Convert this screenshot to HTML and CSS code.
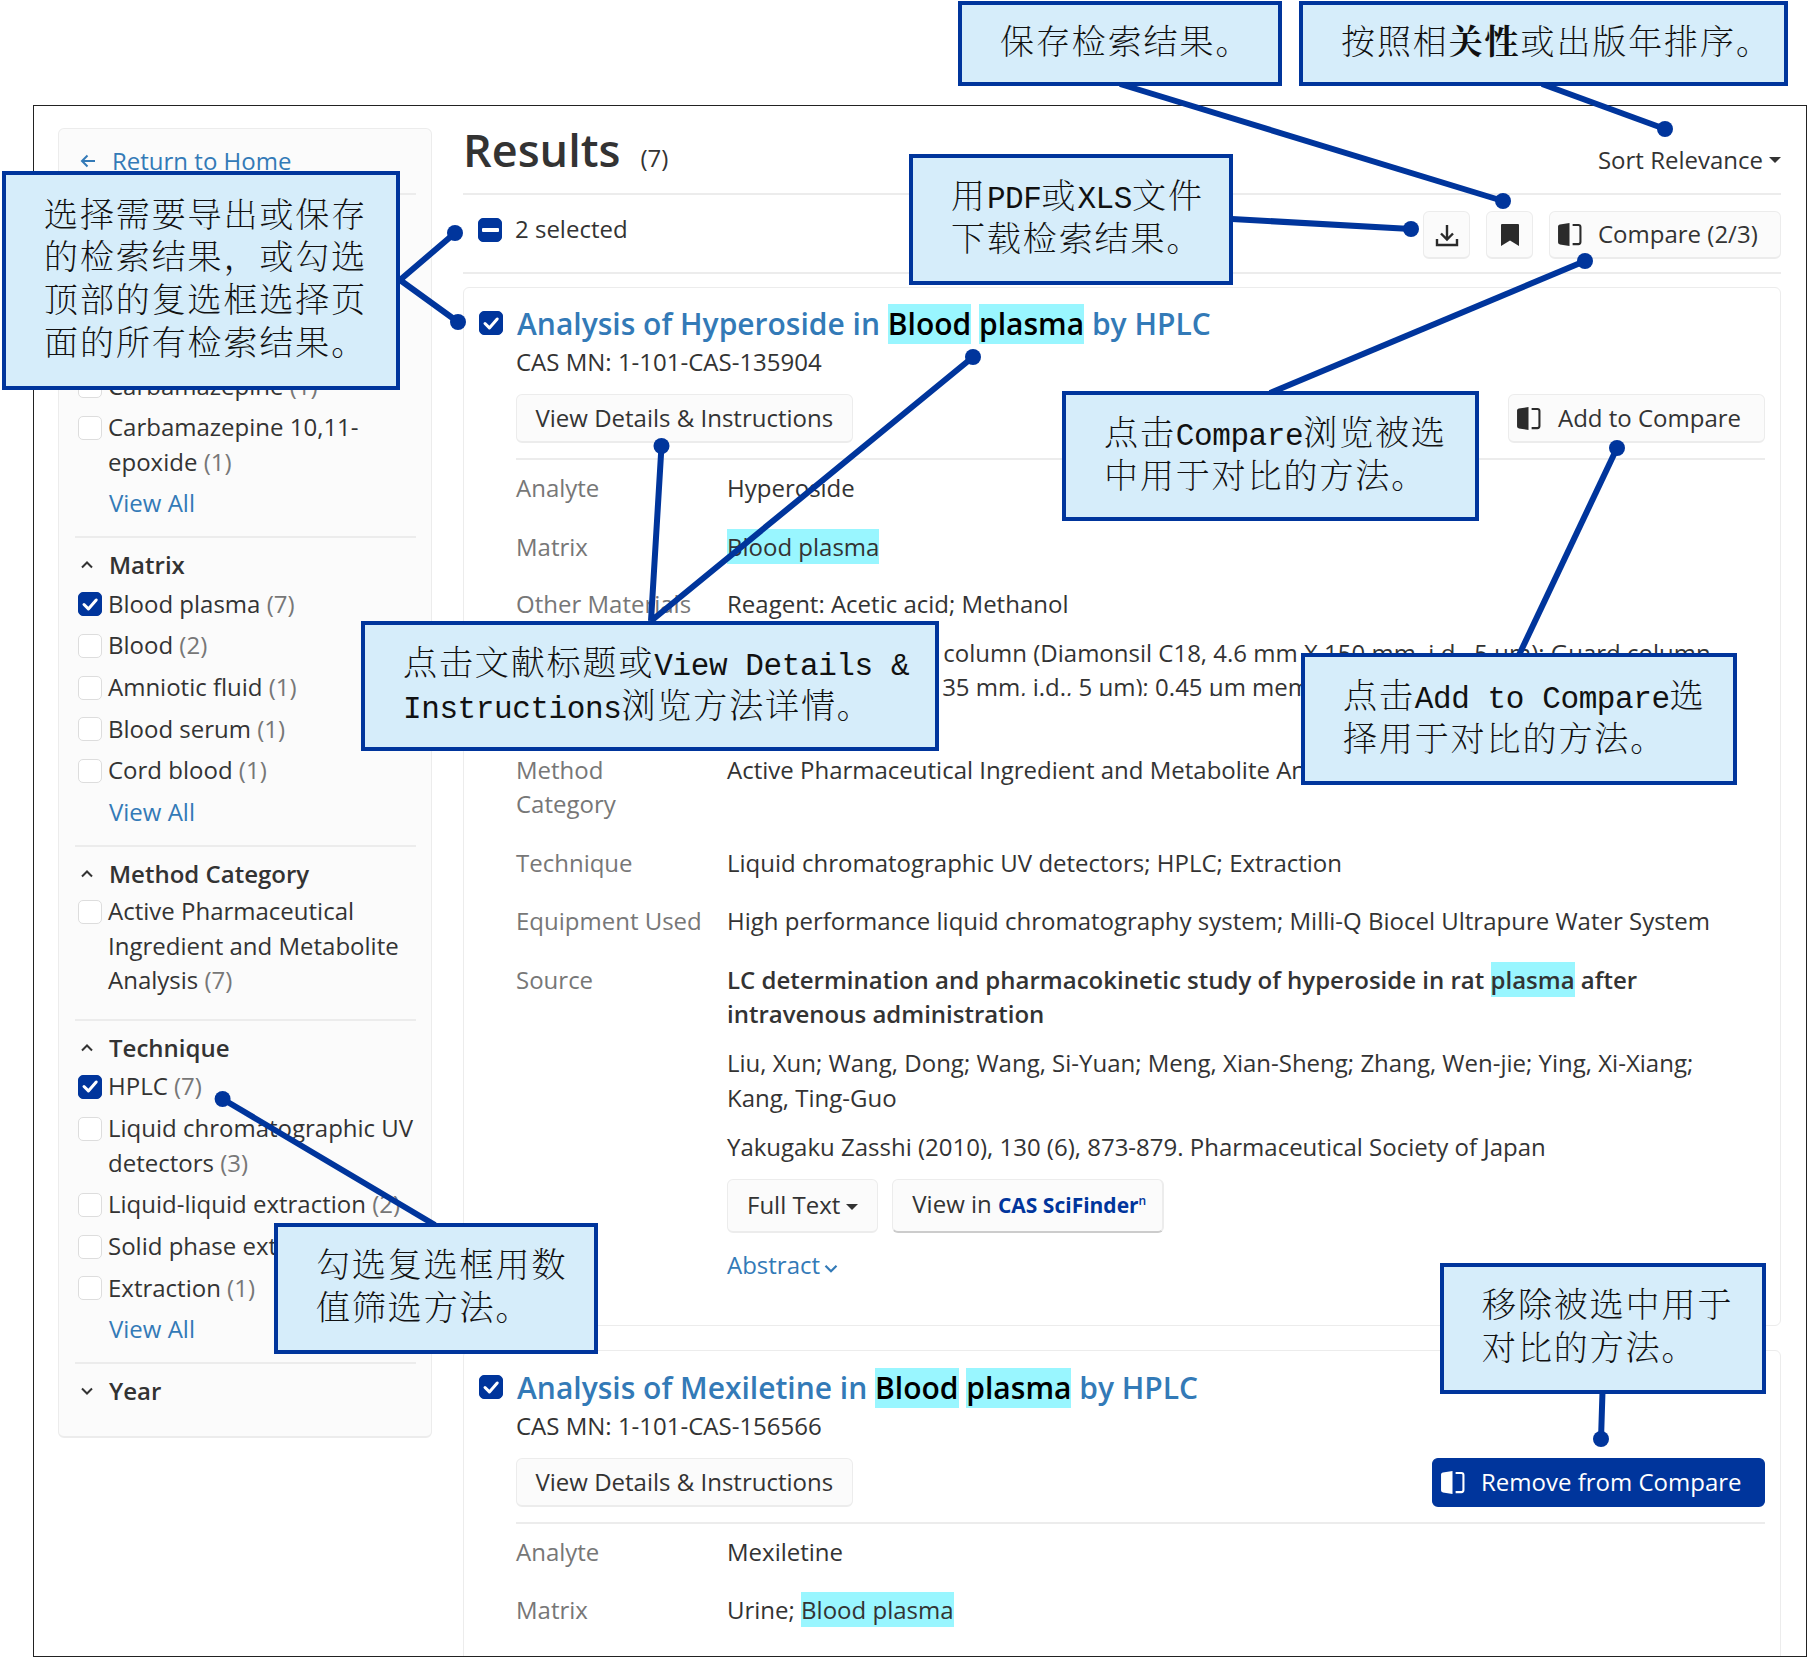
FILE: index.html
```html
<!DOCTYPE html>
<html lang="en">
<head>
<meta charset="utf-8">
<title>CAS Methods Results</title>
<link rel="stylesheet" href="styles.css">
</head>
<body>
<svg class="defs" width="0" height="0" aria-hidden="true">
  <symbol id="chk" viewBox="0 0 24 24"><path d="M6 12.500l4.400 4.400L18.200 8" fill="none" stroke="#fff" stroke-width="3" stroke-linecap="round" stroke-linejoin="round"/></symbol>
  <symbol id="cmp" viewBox="0 0 24 24"><path d="M1 4.500C1 3.400 1.800 2.700 2.800 2.500L12 1v22l-9.200-1.500C1.800 21.300 1 20.600 1 19.500z" fill="currentColor"/><path d="M15 2.800h5.500a2 2 0 0 1 2 2v14.400a2 2 0 0 1-2 2H15" fill="none" stroke="currentColor" stroke-width="2"/></symbol>
  <symbol id="up" viewBox="0 0 14 10"><path d="M2 7.500l5-5 5 5" fill="none" stroke="currentColor" stroke-width="2"/></symbol>
  <symbol id="down" viewBox="0 0 14 10"><path d="M2 2.500l5 5 5-5" fill="none" stroke="currentColor" stroke-width="2"/></symbol>
</svg>
<div class="stage">
  <div class="frame">
    <aside class="side">
      <div class="home"><svg class="back" viewBox="0 0 16 14"><path d="M15 7H2M7.500 1.500L2 7l5.500 5.500" fill="none" stroke="currentColor" stroke-width="2"/></svg><a class="link">Return to Home</a></div>

      <section class="facet">
        <h3><svg class="chev"><use href="#up"/></svg>Analyte</h3>
        <div class="opt"><i class="box"></i><span>Hyperoside <em>(1)</em></span></div>
        <div class="opt"><i class="box"></i><span>Mexiletine <em>(1)</em></span></div>
        <div class="opt"><i class="box"></i><span>Atorvastatin <em>(1)</em></span></div>
        <div class="opt"><i class="box"></i><span>Carbamazepine <em>(1)</em></span></div>
        <div class="opt"><i class="box"></i><span>Carbamazepine 10,11-<br>epoxide <em>(1)</em></span></div>
        <a class="link all">View All</a>
      </section>

      <section class="facet">
        <h3><svg class="chev"><use href="#up"/></svg>Matrix</h3>
        <div class="opt"><i class="box on"><svg><use href="#chk"/></svg></i><span>Blood plasma <em>(7)</em></span></div>
        <div class="opt"><i class="box"></i><span>Blood <em>(2)</em></span></div>
        <div class="opt"><i class="box"></i><span>Amniotic fluid <em>(1)</em></span></div>
        <div class="opt"><i class="box"></i><span>Blood serum <em>(1)</em></span></div>
        <div class="opt"><i class="box"></i><span>Cord blood <em>(1)</em></span></div>
        <a class="link all">View All</a>
      </section>

      <section class="facet short">
        <h3><svg class="chev"><use href="#up"/></svg>Method Category</h3>
        <div class="opt"><i class="box"></i><span>Active Pharmaceutical<br>Ingredient and Metabolite<br>Analysis <em>(7)</em></span></div>
      </section>

      <section class="facet">
        <h3><svg class="chev"><use href="#up"/></svg>Technique</h3>
        <div class="opt"><i class="box on"><svg><use href="#chk"/></svg></i><span>HPLC <em>(7)</em></span></div>
        <div class="opt"><i class="box"></i><span>Liquid chromatographic UV<br>detectors <em>(3)</em></span></div>
        <div class="opt"><i class="box"></i><span>Liquid-liquid extraction <em>(2)</em></span></div>
        <div class="opt"><i class="box"></i><span>Solid phase extraction <em>(2)</em></span></div>
        <div class="opt"><i class="box"></i><span>Extraction <em>(1)</em></span></div>
        <a class="link all">View All</a>
      </section>

      <section class="facet last">
        <h3><svg class="chev"><use href="#down"/></svg>Year</h3>
      </section>
    </aside>

    <main class="main">
      <header class="head">
        <h1>Results</h1><span class="count">(7)</span>
        <div class="sort">Sort Relevance<i class="caret"></i></div>
      </header>
      <div class="tools">
        <i class="box on big"><b class="dash"></b></i>
        <span class="sel">2 selected</span>
        <div class="toolbtns">
          <button class="btn sq"><svg class="ico" viewBox="0 0 24 24"><path d="M12 2v14M6 10.500l6 6 6-6M2 16v6h20v-6" fill="none" stroke="currentColor" stroke-width="2.400"/></svg></button>
          <button class="btn sq"><svg class="ico" viewBox="0 0 24 24"><path d="M4 1h16a1 1 0 0 1 1 1v21l-9-5.500L3 23V2a1 1 0 0 1 1-1z" fill="currentColor"/></svg></button>
          <button class="btn cmpbtn"><svg class="cmpi"><use href="#cmp"/></svg>Compare (2/3)</button>
        </div>
      </div>

      <article class="card first">
        <div class="title"><i class="box on big"><svg><use href="#chk"/></svg></i><h2>Analysis of Hyperoside in <mark>Blood</mark> <mark>plasma</mark> by HPLC</h2></div>
        <div class="cas">CAS MN: 1-101-CAS-135904</div>
        <div class="acts"><button class="btn">View Details &amp; Instructions</button><button class="btn cmpbtn small"><svg class="cmpi"><use href="#cmp"/></svg>Add to Compare</button></div>
        <div class="row"><div class="lab">Analyte</div><div class="val">Hyperoside</div></div>
        <div class="row"><div class="lab">Matrix</div><div class="val"><mark>Blood plasma</mark></div></div>
        <div class="row tight"><div class="lab">Other Materials</div><div class="val">Reagent: Acetic acid; Methanol</div></div>
        <div class="row clip"><div class="lab">Equipment</div><div class="val"><span class="pre">Column: Analytical</span> column (Diamonsil C18, 4.6 mm X 150 mm, i.d., 5 μm); Guard column<br><span class="pre2">(Diamonsil C18, 8 X</span> 35 mm, i.d., 5 μm); 0.45 μm membrane filter</div></div>
        <div class="row"><div class="lab">Method<br>Category</div><div class="val">Active Pharmaceutical Ingredient and Metabolite Analysis</div></div>
        <div class="row"><div class="lab">Technique</div><div class="val">Liquid chromatographic UV detectors; HPLC; Extraction</div></div>
        <div class="row"><div class="lab">Equipment Used</div><div class="val">High performance liquid chromatography system; Milli-Q Biocel Ultrapure Water System</div></div>
        <div class="row src"><div class="lab">Source</div><div class="val">
          <p class="srct">LC determination and pharmacokinetic study of hyperoside in rat <mark>plasma</mark> after<br>intravenous administration</p>
          <p>Liu, Xun; Wang, Dong; Wang, Si-Yuan; Meng, Xian-Sheng; Zhang, Wen-jie; Ying, Xi-Xiang;<br>Kang, Ting-Guo</p>
          <p>Yakugaku Zasshi (2010), 130 (6), 873-879. Pharmaceutical Society of Japan</p>
          <div class="links"><button class="btn tall">Full Text<i class="caret"></i></button><button class="btn tall sci">View in <strong>CAS SciFinder<sup>n</sup></strong></button></div>
          <a class="link abs">Abstract<svg class="absi"><use href="#down"/></svg></a>
        </div></div>
      </article>

      <article class="card second">
        <div class="title"><i class="box on big"><svg><use href="#chk"/></svg></i><h2>Analysis of Mexiletine in <mark>Blood</mark> <mark>plasma</mark> by HPLC</h2></div>
        <div class="cas">CAS MN: 1-101-CAS-156566</div>
        <div class="acts"><button class="btn">View Details &amp; Instructions</button><button class="btn cmpbtn small active"><svg class="cmpi"><use href="#cmp"/></svg>Remove from Compare</button></div>
        <div class="row"><div class="lab">Analyte</div><div class="val">Mexiletine</div></div>
        <div class="row"><div class="lab">Matrix</div><div class="val">Urine; <mark>Blood plasma</mark></div></div>
      </article>
    </main>
  </div>

  <svg class="wires" viewBox="0 0 1807 1658">
    <g fill="none" stroke="#00359c" stroke-width="6">
      <path d="M400 280L455 233M400 280L458 322"/>
      <path d="M1120 84L1503 201"/>
      <path d="M1542 84L1665 129"/>
      <path d="M1232 219L1411 229"/>
      <path d="M1270 393L1585 261"/>
      <path d="M1519 655L1617 448"/>
      <path d="M651 621L973 357M651 621L661.500 446"/>
      <path d="M435 1225L222.600 1099"/>
      <path d="M1602.500 1392L1601 1439"/>
    </g>
    <g fill="#00359c">
      <circle cx="455" cy="233" r="8"/><circle cx="458" cy="322" r="8"/>
      <circle cx="1503" cy="201" r="8"/><circle cx="1665" cy="129" r="8"/>
      <circle cx="1411" cy="229" r="8"/><circle cx="1585" cy="261" r="8"/>
      <circle cx="1617" cy="448" r="8"/><circle cx="973" cy="357" r="8"/>
      <circle cx="661.500" cy="446" r="8"/><circle cx="222.600" cy="1099" r="8"/>
      <circle cx="1601" cy="1439" r="8"/>
    </g>
  </svg>

  <div class="note n-a"><div>选择需要导出或保存<br>的检索结果，或勾选<br>顶部的复选框选择页<br>面的所有检索结果。</div></div>
  <div class="note n-b"><div>保存检索结果。</div></div>
  <div class="note n-c"><div>按照相<b>关性</b>或出版年排序。</div></div>
  <div class="note n-d"><div>用<span class="lat">PDF</span>或<span class="lat">XLS</span>文件<br>下载检索结果。</div></div>
  <div class="note n-e"><div>点击<span class="lat">Compare</span>浏览被选<br>中用于对比的方法。</div></div>
  <div class="note n-f"><div>点击文献标题或<span class="lat">View Details &amp;</span><br><span class="lat">Instructions</span>浏览方法详情。</div></div>
  <div class="note n-g"><div>点击<span class="lat">Add to Compare</span>选<br>择用于对比的方法。</div></div>
  <div class="note n-h"><div>勾选复选框用数<br>值筛选方法。</div></div>
  <div class="note n-i"><div>移除被选中用于<br>对比的方法。</div></div>
</div>
</body>
</html>
```
FILE: styles.css
```css
* { box-sizing: border-box; }
html, body { margin: 0; padding: 0; background: #fff; }
body { font-family: "Open Sans", "Noto Sans", sans-serif; font-size: 24px; line-height: 34.5px; color: #333; }
.defs { position: absolute; }
.stage { position: relative; width: 1807px; height: 1658px; overflow: hidden; padding: 105px 0 0 33px; }
.frame { width: 1774px; height: 1552px; border: 1.5px solid #222; overflow: hidden; display: flex; align-items: flex-start; background: #fff; }

/* sidebar */
.side { width: 374px; margin: 21.5px 0 0 24px; padding: 15px 15.5px 0 16px; background: #fbfbfb; border: 1px solid #ececec; border-bottom-width: 2px; border-radius: 6px; height: 1310px; flex: none; }
.home { display: flex; align-items: center; height: 34.5px; margin-bottom: 15px; padding-left: 5px; color: #337ab7; }
.back { width: 16px; height: 14px; margin-right: 16px; }
.link { color: #337ab7; }
.facet { border-top: 2px solid #ececec; padding-top: 10px; padding-bottom: 15.2px; }
.facet.short { padding-bottom: 14px; }
.facet.short h3 { margin-bottom: 3px; }
.facet h3 { display: flex; align-items: center; margin: 0 0 4px; font-size: 24px; line-height: 34.5px; font-weight: 600; color: #333; }
.chev { width: 14px; height: 10px; margin: 0 15px 0 5px; color: #333; }
.opt { display: flex; align-items: flex-start; margin-bottom: 7.2px; padding-left: 3px; }
.opt em { font-style: normal; color: #777; }
.opt span { margin-left: 6px; }
.box { flex: none; display: block; width: 24px; height: 24px; margin-top: 5.5px; border: 1.5px solid #ddd; border-radius: 5px; background: #fff; }
.box svg { display: block; width: 100%; height: 100%; }
.box.on { background: #00359c; border-color: #00359c; }
.box.big { margin-top: 0; }
.box.on svg { width: 24px; height: 24px; margin: -1.5px; }
.all { display: block; margin: 0 0 0 34px; }
.last { padding-bottom: 0; }

/* results */
.main { width: 1318px; margin-left: 31px; flex: none; }
.head { display: flex; align-items: baseline; height: 89px; padding-top: 17px; border-bottom: 2px solid #ececec; }
.head h1 { margin: 0; font-size: 45px; line-height: 54px; font-weight: 600; color: #333; }
.count { margin-left: 20px; }
.sort { margin-left: auto; display: flex; align-items: center; position: relative; top: 1.5px; }
.caret { display: inline-block; width: 0; height: 0; margin-left: 6px; border: 6px solid transparent; border-top-color: #333; border-bottom: 0; }
.tools { display: flex; align-items: center; height: 79px; border-bottom: 2px solid #ececec; padding-left: 15px; }
.tools .box { margin-bottom: 7px; }
.dash { display: block; width: 17px; height: 4px; margin: 8.5px auto 0; background: #fff; border-radius: 1px; }
.sel { margin-left: 13px; position: relative; top: -4.5px; }
.toolbtns { margin-left: auto; display: flex; gap: 16px; position: relative; top: 1.5px; }
.toolbtns .btn { height: 47.5px; }
.btn { font: inherit; color: #333; background: #fbfbfb; border: 1.5px solid #ececec; border-bottom-width: 2.5px; border-radius: 6px; height: 49px; padding: 0 18.5px; white-space: nowrap; }
.btn.sq { width: 47px; padding: 0; display: flex; align-items: center; justify-content: center; }
.ico { width: 24px; height: 24px; color: #2b2b2b; }
.cmpbtn { display: flex; align-items: center; padding: 0 23px 0 7px; }
.cmpi { width: 25px; height: 25px; margin-right: 17px; color: #2b2b2b; flex: none; }
.toolbtns .cmpi, .active .cmpi { margin-right: 16px; }
.toolbtns .cmpbtn { width: 232px; }

.card { border: 1.5px solid #ececec; border-radius: 6px; margin-top: 13px; padding: 15.5px 15px 0 16px; height: 1039px; background: #fff; }
.card.first { margin-bottom: 24px; }
.card.second { padding-top: 16.5px; }
.card.second .row + .row { margin-top: 23px; }
.title { display: flex; align-items: center; height: 40px; }
.title .box { margin: -1px 14px 0 -1px; }
.title h2 { margin: 0; font-size: 30px; line-height: 40px; font-weight: 600; color: #337ab7; white-space: nowrap; }
mark { background: #99f6ff; color: inherit; padding: 1px 0; }
.title mark { display: inline-block; color: #000; line-height: 40px; padding: 0; }
.cas { margin: 1.5px 0 0 36px; }
.acts { display: flex; justify-content: space-between; margin: 14.5px 0 0 36px; padding-bottom: 15px; border-bottom: 2px solid #ececec; height: 66px; }
.active { background: #00359c; border-color: #00359c; color: #fff; }
.active .cmpi { color: #fff; }
.small { width: 257px; }
.active.small { width: 333px; }
.row { display: flex; margin: 11px 0 0 36px; }
.row + .row { margin-top: 24px; }
.lab { width: 211px; flex: none; color: #777; }
.val { flex: 1; white-space: nowrap; }
.row.tight { margin-top: 23px; }
.row.tight + .row.clip { margin-top: 14px; }
.row.clip { height: 60px; overflow: hidden; align-items: flex-start; }
.row.clip + .row { margin-top: 57px; }
.pre { margin-right: 3.5px; }
.pre2 { margin-left: -5px; }
.src p { margin: 0 0 14.5px; }
.srct { font-weight: 600; }
.links { display: flex; gap: 14px; margin-top: 1.5px; }
.tall { height: 54px; padding: 0 19px; }
.tall .caret { margin-left: 6px; vertical-align: middle; }
.sci { padding-right: 16px; border-right-width: 2.5px; border-bottom-color: #ccc; }
.sci strong { color: #00359c; font-weight: 700; font-size: 21px; }
.sci sup { font-size: 12px; line-height: 0; font-weight: 600; }
.abs { display: block; margin-top: 15px; }
.absi { width: 16px; height: 11px; margin-left: 3px; }

/* annotation overlay */
.wires { position: absolute; left: 0; top: 0; width: 1807px; height: 1658px; pointer-events: none; }
.note { position: absolute; display: flex; align-items: center; white-space: nowrap; padding: 0 0 7px 38px; background: #d6edfa; border: 4px solid #00359c; color: #111; font-family: "Noto Serif CJK SC", "Noto Sans CJK SC", serif; font-weight: 200; font-size: 34px; line-height: 42.7px; letter-spacing: 1.9px; }
.note b { font-weight: 700; }
.lat { font-family: "Liberation Mono", monospace; font-size: 31px; line-height: 0; letter-spacing: -0.4px; font-weight: 400; }
.n-a { left: 2px; top: 171px; width: 398px; height: 219px; }
.n-b { left: 958px; top: 1px; width: 324px; height: 85px; }
.n-c { left: 1299px; top: 1px; width: 489px; height: 85px; }
.n-d { left: 909px; top: 154px; width: 324px; height: 131px; }
.n-e { left: 1062px; top: 391px; width: 417px; height: 130px; }
.n-f { left: 361px; top: 621px; width: 578px; height: 130px; }
.n-g { left: 1301px; top: 653px; width: 436px; height: 132px; }
.n-h { left: 274px; top: 1223px; width: 324px; height: 131px; }
.n-i { left: 1440px; top: 1263px; width: 326px; height: 131px; }
```
